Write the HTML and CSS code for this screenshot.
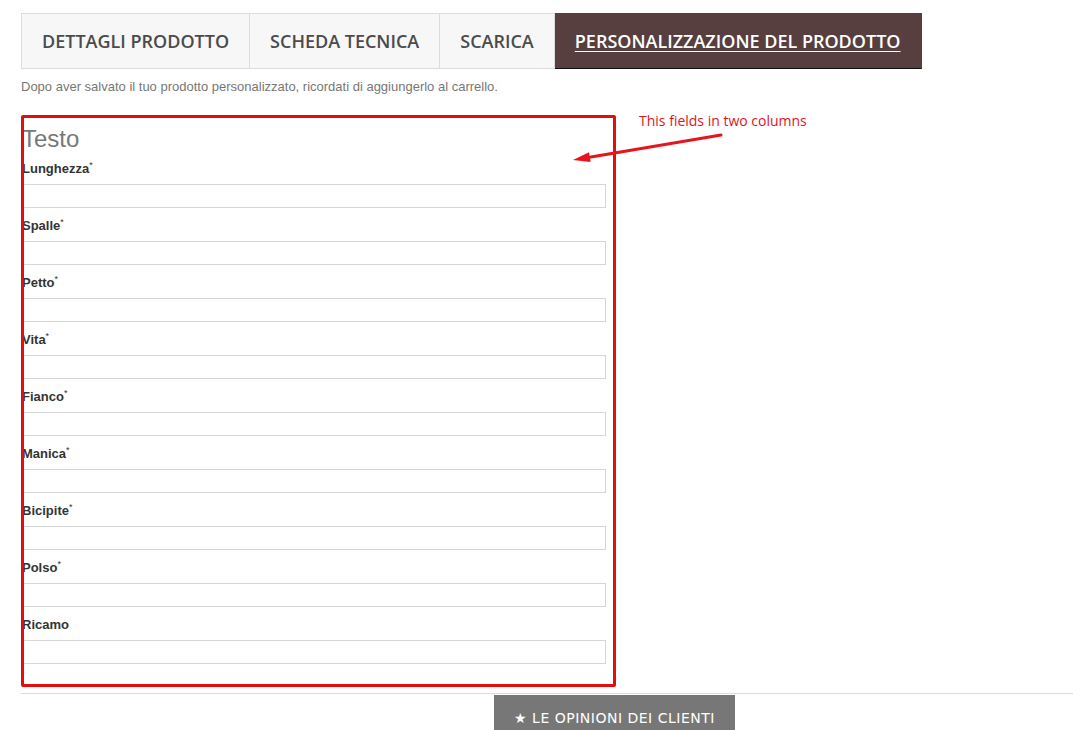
FILE: index.html
```html
<!DOCTYPE html>
<html lang="it">
<head>
<meta charset="utf-8">
<title>Personalizzazione del prodotto</title>
<link rel="stylesheet" href="styles.css">
</head>
<body>
<div class="page">
  <ul class="tabs">
    <li class="tab">DETTAGLI PRODOTTO</li>
    <li class="tab">SCHEDA TECNICA</li>
    <li class="tab">SCARICA</li>
    <li class="tab active"><a href="#">PERSONALIZZAZIONE DEL PRODOTTO</a></li>
  </ul>
  <p class="note">Dopo aver salvato il tuo prodotto personalizzato, ricordati di aggiungerlo al carrello.</p>

  <div class="custom">
    <form class="fields">
      <h3 class="group-title">Testo</h3>
      <div class="field"><label>Lunghezza<sup>*</sup></label><input type="text"></div>
      <div class="field"><label>Spalle<sup>*</sup></label><input type="text"></div>
      <div class="field"><label>Petto<sup>*</sup></label><input type="text"></div>
      <div class="field"><label>Vita<sup>*</sup></label><input type="text"></div>
      <div class="field"><label>Fianco<sup>*</sup></label><input type="text"></div>
      <div class="field"><label>Manica<sup>*</sup></label><input type="text"></div>
      <div class="field"><label>Bicipite<sup>*</sup></label><input type="text"></div>
      <div class="field"><label>Polso<sup>*</sup></label><input type="text"></div>
      <div class="field"><label>Ricamo</label><input type="text"></div>
    </form>
    <div class="highlight"></div>
    <div class="annotation">This fields in two columns</div>
    <svg class="arrow" width="160" height="40" viewBox="0 0 160 40">
      <line x1="151" y1="5" x2="18" y2="27.5" stroke="#e8141c" stroke-width="3" stroke-linecap="round"/>
      <polygon points="3,30 19,22.3 20.6,32.1" fill="#e8141c"/>
    </svg>
  </div>

  <div class="reviews">
    <span class="reviews-btn">&#9733; LE OPINIONI DEI CLIENTI</span>
  </div>
</div>
</body>
</html>
```

FILE: styles.css
```css
html, body {
  margin: 0;
  padding: 0;
  background: #fff;
}

.page {
  padding: 13px 0 0 21px;
  font-family: "Liberation Sans", Arial, sans-serif;
}

.tabs {
  list-style: none;
  margin: 0;
  padding: 0;
  display: flex;
}

.tab {
  height: 54px;
  line-height: 54px;
  padding: 0 20px;
  background: #f7f7f7;
  border: 1px solid #dcdcdc;
  border-left: none;
  font-family: "Open Sans", sans-serif;
  font-weight: 600;
  font-size: 18px;
  color: #4b4b4b;
  white-space: nowrap;
}

.tab:first-child {
  border-left: 1px solid #dcdcdc;
}

.tab.active {
  background: #573f3f;
  border-color: #573f3f;
  border-bottom: 1px solid #111;
}

.tab.active a {
  color: #fff;
  text-decoration: underline;
  text-underline-offset: 3px;
}

.note {
  margin: 10px 0 0;
  font-size: 13px;
  line-height: 16px;
  color: #777;
}

.custom {
  position: relative;
  margin-top: 20px;
  height: 572px;
}

.fields {
  padding: 9px 0 0 1px;
  width: 584px;
}

.group-title {
  margin: 0 0 7px;
  font-weight: normal;
  font-size: 24px;
  line-height: 29px;
  color: #777;
}

.field label {
  display: block;
  font-size: 13px;
  font-weight: bold;
  line-height: 18px;
  color: #333;
}

.field label sup {
  font-size: 9px;
  font-weight: normal;
  vertical-align: 5px;
  line-height: 0;
}

.field input {
  display: block;
  box-sizing: border-box;
  width: 100%;
  height: 24px;
  margin: 6px 0 9px;
  border: 1px solid #d6d6d6;
  background: #fff;
  padding: 0 4px;
}

.highlight {
  position: absolute;
  left: 0;
  top: 0;
  width: 589px;
  height: 566px;
  border: 3px solid #e30d0d;
  border-radius: 2px;
}

.annotation {
  position: absolute;
  left: 618px;
  top: -2px;
  font-family: "Open Sans", sans-serif;
  font-size: 14px;
  line-height: 16px;
  color: #e0141c;
}

.arrow {
  position: absolute;
  left: 549px;
  top: 15px;
}

.reviews {
  border-top: 1px solid #dcdcdc;
  margin-top: 6px;
  padding-left: 473px;
}

.reviews-btn {
  display: inline-block;
  margin-top: 1px;
  width: 241px;
  height: 35px;
  line-height: 46px;
  background: #777;
  color: #fff;
  text-align: center;
  font-family: "DejaVu Sans", Verdana, sans-serif;
  font-size: 14px;
  letter-spacing: 0.5px;
  overflow: hidden;
}
```
